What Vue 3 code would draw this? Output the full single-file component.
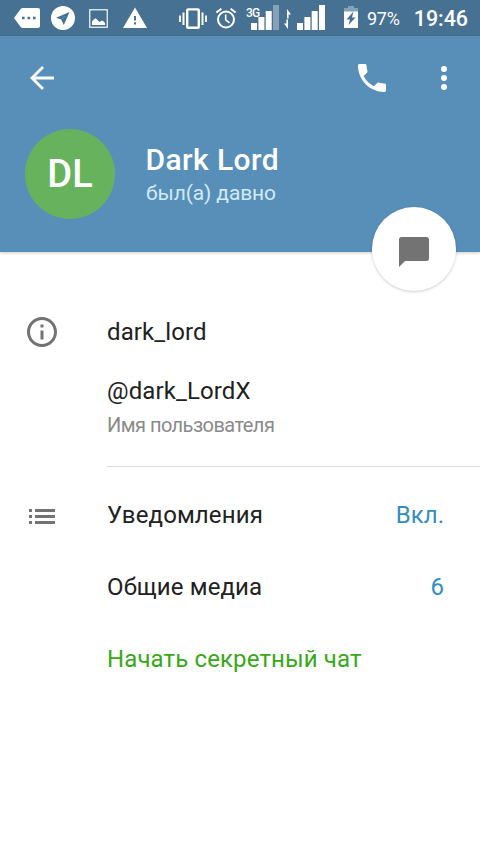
<script setup>
const signalBars = [
  { x: 0, y: 18, h: 7 },
  { x: 7.4, y: 12, h: 13 },
  { x: 14.7, y: 6, h: 19 },
  { x: 22, y: 0, h: 25 },
]

const rows = [
  { title: 'Уведомления', value: 'Вкл.', icon: true },
  { title: 'Общие медиа', value: '6' },
  { title: 'Начать секретный чат', accent: true },
]
</script>

<template>
  <div class="screen">
    <div class="status">
      <svg class="tag" width="26" height="20" viewBox="0 0 26 20">
        <path fill="#fff" fill-rule="evenodd" d="M0 10 6.500 1.200Q7.400 0 9 0H24Q26 0 26 2V18Q26 20 24 20H9Q7.400 20 6.500 18.800ZM8 8.700V11.300H10.600V8.700ZM13.500 8.700V11.300H16.100V8.700ZM19 8.700V11.300H21.600V8.700Z" />
      </svg>
      <svg class="plane" width="24" height="24" viewBox="0 0 24 24">
        <circle cx="12" cy="12" r="12" fill="#fff" />
        <path fill="#477192" d="M18.500 6 5 11.700 10.200 13.600 12.800 19Z" />
        <path d="M10.200 13.600 14 10.200" stroke="#7f9db5" stroke-width=".8" />
      </svg>
      <svg class="picture" width="19" height="19" viewBox="0 0 19 19">
        <rect x=".75" y=".75" width="17.500" height="17.500" fill="none" stroke="#e8f2f8" stroke-width="1.300" />
        <path fill="#fff" d="M3 16V12.500L5 10.200Q6.500 8.700 8 10.500L10.500 13 12.500 11.800Q13.700 11.300 14.700 12.500L16 14V16Z" />
      </svg>
      <svg class="warning" width="24" height="21" viewBox="0 0 24 21">
        <path fill="#fff" d="M12 0.500 24 21H0Z" />
        <path fill="#477192" d="M11 9h2v4.500h-2zM11 15.300h2v2.200h-2z" />
      </svg>
      <svg class="vibrate" width="28" height="22" viewBox="0 0 28 22" fill="none" stroke="#fff">
        <rect x="8.200" y="1.400" width="11.600" height="18.400" rx="1" stroke-width="2.400" />
        <path d="M4.500 4.500V17M23.500 4.500V17" stroke-width="2" />
        <path d="M1 7.500V14M27 7.500V14" stroke-width="1.800" />
      </svg>
      <svg class="alarm" width="22" height="22" viewBox="0 0 22 22" fill="none" stroke="#fff">
        <circle cx="11" cy="12.500" r="8" stroke-width="2" />
        <path d="M10.700 7.500V12.800L14.500 15.800" stroke-width="1.600" />
        <path d="M1.400 5.500 6.400 1.700M20.600 5.500 15.600 1.700" stroke-width="2" />
      </svg>
      <div class="mobile">
        <span class="network">3G</span>
        <svg width="28" height="25" viewBox="0 0 28 25" fill="#fff">
          <rect v-for="(b, i) in signalBars" :key="i" :x="b.x" :y="b.y" width="6" :height="b.h" :opacity="i === 3 ? 0.35 : 1" />
        </svg>
      </div>
      <svg class="traffic" width="7" height="20" viewBox="0 0 7 20" fill="#fff">
        <path d="M3 0 7 5.500H4.600V9.500H3ZM2.400 10.500H4V20L0 14.500H2.400Z" />
      </svg>
      <svg class="signal" width="28" height="25" viewBox="0 0 28 25" fill="#fff">
        <rect v-for="(b, i) in signalBars" :key="i" :x="b.x" :y="b.y" width="6" :height="b.h" />
      </svg>
      <svg class="battery" width="14" height="22" viewBox="0 0 14 22">
        <path fill="#fff" opacity=".35" d="M4 0H10V2H14V6H0V2H4Z" />
        <path fill="#fff" d="M0 5.500H14V22H0Z" />
        <path fill="#477192" d="M9.500 5.500 2.500 13.500H6L4.500 19 11.500 11.500H8Z" />
      </svg>
      <span class="percent">97%</span>
      <span class="clock">19:46</span>
    </div>

    <header class="header">
      <nav class="toolbar">
        <svg class="back" width="24" height="24" viewBox="0 0 24 24" fill="none" stroke="#fff" stroke-width="2.800">
          <path d="M24 12H2.500M13 1 2 12 13 23" />
        </svg>
        <svg class="phone" width="28" height="28" viewBox="3 3 18 18" fill="#fff">
          <path d="M6.620 10.790c1.440 2.830 3.760 5.140 6.590 6.590l2.200-2.200c.27-.27.67-.36 1.020-.24 1.120.37 2.330.57 3.570.57.55 0 1 .45 1 1V20c0 .55-.45 1-1 1-9.390 0-17-7.610-17-17 0-.55.45-1 1-1h3.500c.55 0 1 .45 1 1 0 1.250.2 2.450.57 3.570.11.35.03.74-.25 1.020l-2.200 2.200z" />
        </svg>
        <svg class="more" width="6" height="24" viewBox="0 0 6 24" fill="#fff">
          <circle cx="3" cy="3" r="3" />
          <circle cx="3" cy="12" r="3" />
          <circle cx="3" cy="21" r="3" />
        </svg>
      </nav>
      <div class="profile">
        <div class="avatar">DL</div>
        <div class="identity">
          <div class="name">Dark Lord</div>
          <div class="seen">был(а) давно</div>
        </div>
      </div>
      <button class="fab" aria-label="Чат">
        <svg width="30" height="30" viewBox="2 2 20 20" fill="#737373">
          <path d="M20.500 2H3.500c-.9 0-1.500.7-1.500 1.500v18.500l4-4h14.500c.9 0 1.500-.7 1.500-1.500V3.500c0-.8-.7-1.500-1.500-1.500z" />
        </svg>
      </button>
    </header>

    <section class="about">
      <svg class="lead" width="30" height="30" viewBox="2 2 20 20" fill="#737373">
        <path d="M11 17h2v-6h-2v6zm1-15C6.480 2 2 6.480 2 12s4.480 10 10 10 10-4.480 10-10S17.520 2 12 2zm0 18c-4.410 0-8-3.590-8-8s3.590-8 8-8 8 3.590 8 8-3.590 8-8 8zM11 9h2V7h-2v2z" />
      </svg>
      <div class="details">
        <div class="line">dark_lord</div>
        <div class="line user">@dark_LordX</div>
        <div class="caption">Имя пользователя</div>
      </div>
    </section>

    <section class="list">
      <div v-for="row in rows" :key="row.title" class="row">
        <div class="slot">
          <svg v-if="row.icon" width="26" height="15" viewBox="0 0 26 15" fill="#737373">
            <path d="M0 0h3v3H0zM6 0h20v3H6zM0 6h3v3H0zM6 6h20v3H6zM0 12h3v3H0zM6 12h20v3H6z" />
          </svg>
        </div>
        <span class="label" :class="{ accent: row.accent }">{{ row.title }}</span>
        <span class="value">{{ row.value }}</span>
      </div>
    </section>
  </div>
</template>

<style>
body {
  margin: 0;
  background: #fff;
}
</style>

<style scoped>
.screen {
  width: 480px;
  height: 854px;
  overflow: hidden;
  background: #fff;
  font-family: Roboto, "Noto Sans", sans-serif;
  color: #212121;
}
svg {
  display: block;
  flex: none;
}
.status {
  display: flex;
  align-items: flex-start;
  height: 36px;
  background: #477192;
  color: #fff;
}
.tag { margin: 8px 0 0 14px; }
.plane { margin: 6px 0 0 11px; }
.picture { margin: 9px 0 0 14px; }
.warning { margin: 7px 0 0 15px; }
.vibrate { margin: 8px 0 0 32px; }
.alarm { margin: 7px 0 0 8px; }
.mobile {
  position: relative;
  margin: 5px 0 0 14px;
}
.network {
  position: absolute;
  left: -5px;
  top: 2px;
  font-size: 12px;
  line-height: 12px;
  font-weight: 500;
  letter-spacing: -0.8px;
}
.traffic { margin: 9px 0 0 5px; }
.signal { margin: 5px 0 0 6px; }
.battery { margin: 6px 0 0 19px; }
.percent {
  margin-left: 9px;
  font-size: 18px;
  line-height: 38px;
  letter-spacing: -0.3px;
}
.clock {
  margin-left: auto;
  margin-right: 12px;
  font-size: 21.4px;
  line-height: 38px;
  font-weight: 500;
}
.header {
  position: relative;
  height: 216px;
  background: #588fb8;
  box-shadow: 0 1px 3px rgba(0, 0, 0, 0.2);
}
.toolbar {
  display: flex;
  align-items: center;
  height: 84px;
  padding: 0 33px 0 30px;
}
.phone { margin-left: auto; }
.more { margin-left: 55px; }
.profile {
  display: flex;
  padding: 9px 0 0 25px;
}
.avatar {
  width: 90px;
  height: 90px;
  border-radius: 50%;
  background: #67b35d;
  color: #fff;
  font-size: 38px;
  line-height: 90px;
  font-weight: 500;
  text-align: center;
}
.identity {
  margin-left: 30px;
  padding-top: 14px;
}
.name {
  padding-left: 0.5px;
  font-size: 30px;
  line-height: 34px;
  font-weight: 500;
  letter-spacing: 0.4px;
  color: #fff;
}
.seen {
  padding-left: 1px;
  font-size: 21px;
  line-height: 32px;
  letter-spacing: -0.12px;
  color: #d0eafa;
}
.fab {
  position: absolute;
  right: 24px;
  bottom: -39px;
  display: grid;
  place-items: center;
  width: 84px;
  height: 84px;
  padding: 5px 0 0;
  border: 0;
  border-radius: 50%;
  background: #fff;
  box-shadow: 0 1px 3px rgba(0, 0, 0, 0.2);
}
.about {
  display: flex;
  height: 215px;
}
.lead { margin: 65px 50px 0 27px; }
.details {
  flex: 1;
  padding-top: 62px;
  border-bottom: 1px solid #d9d9d9;
}
.line {
  font-size: 24px;
  line-height: 36px;
  letter-spacing: 0.12px;
}
.user { margin-top: 23px; }
.caption {
  font-size: 20px;
  line-height: 32px;
  letter-spacing: -0.54px;
  color: #8a8a8a;
}
.list { padding-top: 12px; }
.row {
  display: flex;
  align-items: center;
  height: 72px;
  padding-right: 36px;
  font-size: 24px;
}
.slot {
  width: 78px;
  padding: 3px 0 0 29px;
}
.label {
  flex: 1;
  letter-spacing: 0.12px;
}
.value { color: #338dc4; }
.accent { color: #37a919; }
</style>
